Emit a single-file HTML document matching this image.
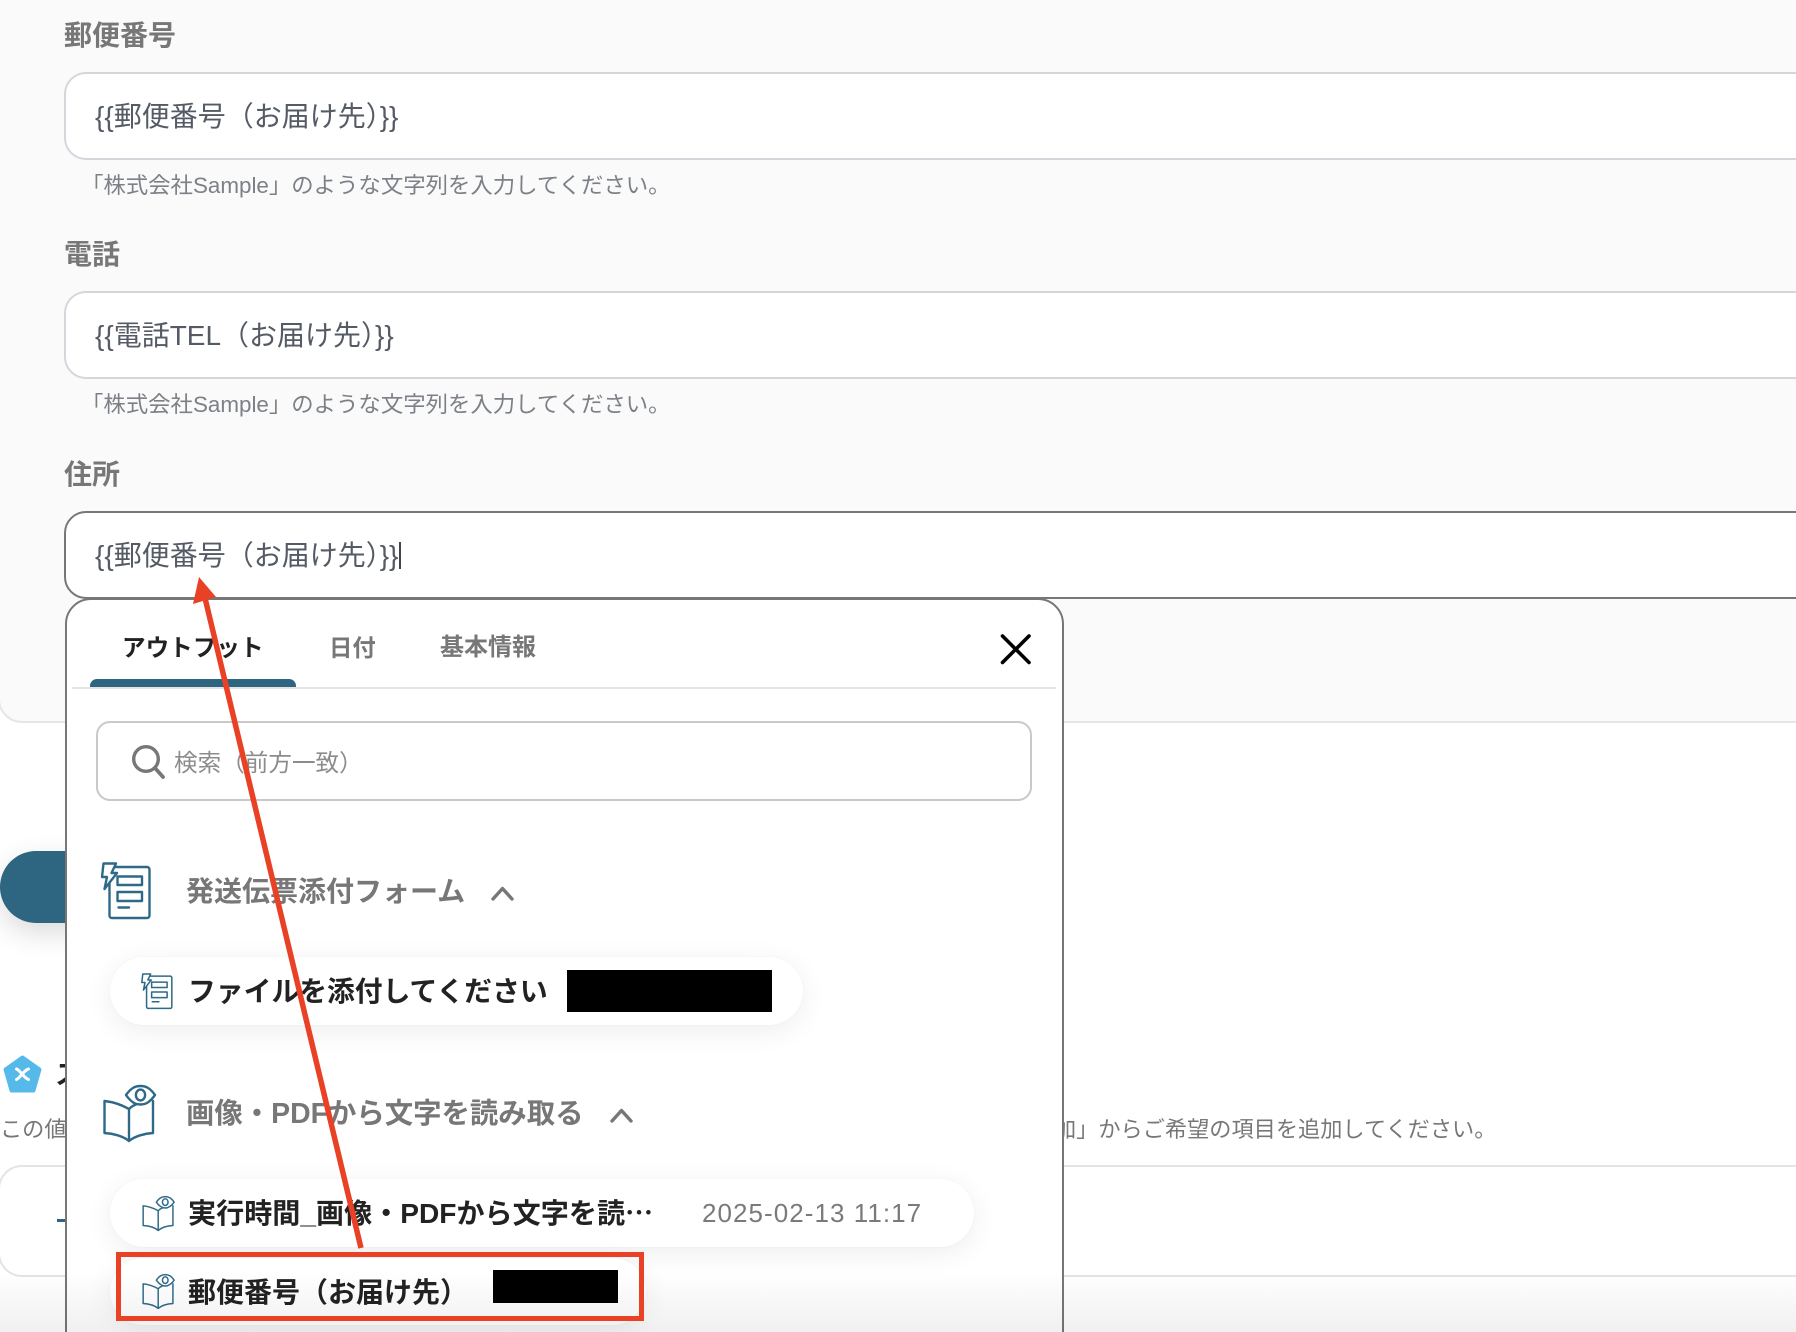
<!DOCTYPE html>
<html lang="ja">
<head>
<meta charset="utf-8">
<title>Form</title>
<style>
html,body{margin:0;padding:0;background:#fff;width:1796px;height:1332px;overflow:hidden}
body{position:relative;font-family:"Liberation Sans","Noto Sans CJK JP",sans-serif}
#w{position:absolute;left:0;top:0;width:1796px;height:1332px;overflow:hidden;background:#fff}
.a{position:absolute;box-sizing:border-box}
.t{position:absolute;white-space:nowrap;line-height:40px;height:40px}
.lb{font-size:28px;font-weight:700;color:#777}
.in{font-size:28px;color:#555b64}
.hint{font-size:22.4px;color:#7c8087}
.box{position:absolute;box-sizing:border-box;left:64px;width:1800px;height:88px;background:#fff;border:2px solid #d3d7db;border-radius:22px}
.hd{font-size:28px;font-weight:700;color:#777}
.it{font-size:27.8px;font-weight:700;color:#222}
.pill{position:absolute;box-sizing:border-box;left:110px;background:#fff;border-radius:34px;box-shadow:0 6px 28px rgba(0,0,0,.07),0 0 2px rgba(0,0,0,.04)}
svg{position:absolute;overflow:visible}
</style>
</head>
<body>
<div id="w">
<svg width="0" height="0" style="position:absolute">
<defs>
<symbol id="form" viewBox="0 0 50 57" overflow="visible">
<g fill="none" stroke="#2e6a87" stroke-width="2.4" stroke-linejoin="round" stroke-linecap="round">
<rect x="8.5" y="5" width="40" height="51" rx="2.5" fill="#fff"/>
<rect x="16.5" y="14.5" width="24.5" height="8.5"/>
<rect x="16.5" y="30" width="24.5" height="9"/>
<path d="M17.5 45.5H28"/>
<path d="M2.5 1.5H15L10.5 11H16L3.5 27L6 15H1Z" fill="#fff"/>
</g>
</symbol>
<symbol id="book" viewBox="0 0 53 57" overflow="visible">
<g fill="none" stroke="#2e6a87" stroke-width="2.4" stroke-linejoin="round" stroke-linecap="round">
<path d="M26 24C19 20 10 17 1.5 16V48C10 48.5 20 51 26 56C32 51 42 48.5 50 48V16"/>
<path d="M26 24V56M26 24C28 22 30 20.5 33 19.5"/>
<path d="M23 10C28 3 32 1 37.5 1C43 1 47 3 52 10C47 17 43 19.5 37.5 19.5C32 19.5 28 17 23 10Z" fill="#fff"/>
<ellipse cx="37.5" cy="10" rx="4.6" ry="5.4"/>
</g>
</symbol>
</defs>
</svg>

<!-- grey form panel -->
<div class="a" style="left:-2px;top:-30px;width:1900px;height:753px;background:#fafafa;border:2px solid #e3e6ea;border-radius:24px"></div>

<div class="t lb" style="left:64px;top:16px">郵便番号</div>
<div class="box" style="top:72px"></div>
<div class="t in" style="left:95px;top:97px">{{郵便番号（お届け先）}}</div>
<div class="t hint" style="left:81px;top:166px">「株式会社Sample」のような文字列を入力してください。</div>

<div class="t lb" style="left:64px;top:235px">電話</div>
<div class="box" style="top:291px"></div>
<div class="t in" style="left:95px;top:316px">{{電話TEL（お届け先）}}</div>
<div class="t hint" style="left:81px;top:385px">「株式会社Sample」のような文字列を入力してください。</div>

<div class="t lb" style="left:64px;top:455px">住所</div>
<div class="box" style="top:511px;border-color:#777"></div>
<div class="t in" style="left:95px;top:536px">{{郵便番号（お届け先）}}</div>
<div class="a" style="left:399px;top:542px;width:1.5px;height:27px;background:#444"></div>

<!-- teal button behind -->
<div class="a" style="left:0;top:851px;width:200px;height:72px;background:#2e6580;border-radius:36px;box-shadow:0 10px 28px rgba(0,0,0,.14)"></div>

<!-- logo + section behind panel -->
<svg style="left:3px;top:1055px" width="39" height="38" viewBox="0 0 39 38">
<path d="M19.5 2.5L36.5 14.5L30.5 35.5H8.5L2.5 14.5Z" fill="#55b9ea" stroke="#55b9ea" stroke-width="4" stroke-linejoin="round"/>
<path d="M13.5 14C17 15 21 23 25.5 24.5M25.5 14C21 15 17 23 13.5 24.5" fill="none" stroke="#fff" stroke-width="3" stroke-linecap="round"/>
</svg>
<div class="t" style="left:55px;top:1055px;font-size:27px;font-weight:700;color:#222">ス</div>
<div class="t hint" style="left:0;top:1110px;color:#777;font-size:22.2px">この値</div>
<div class="t hint" style="left:1054px;top:1110px;color:#777;font-size:22.2px">加」からご希望の項目を追加してください。</div>
<div class="a" style="left:-2px;top:1165px;width:1900px;height:112px;background:#fff;border:2px solid #e4e4e4;border-radius:24px"></div>
<div class="a" style="left:57px;top:1219px;width:10px;height:3px;background:#2e6580"></div>

<!-- popup panel -->
<div class="a" style="left:65px;top:598px;width:999px;height:800px;background:#fff;border:2px solid #777;border-radius:26px"></div>

<div class="t" style="left:122px;top:629px;font-size:23.6px;font-weight:700;color:#222">アウトフット</div>
<div class="t" style="left:329px;top:628px;font-size:23.4px;font-weight:700;color:#777">日付</div>
<div class="t" style="left:440px;top:628px;font-size:24px;font-weight:700;color:#777">基本情報</div>
<div class="a" style="left:90px;top:679px;width:206px;height:8px;background:#2e6580;border-radius:7px 7px 0 0"></div>
<div class="a" style="left:72px;top:687px;width:984px;height:2px;background:#e4e4e4"></div>
<svg style="left:1000px;top:634px" width="30" height="30" viewBox="0 0 30 30"><path d="M2.5 2L29 28.5M29 2L2.5 28.5" stroke="#000" stroke-width="3.6" stroke-linecap="round" fill="none"/></svg>

<div class="a" style="left:96px;top:721px;width:936px;height:80px;border:2px solid #c9c9c9;border-radius:14px;background:#fff"></div>
<svg style="left:132px;top:745px" width="32" height="33" viewBox="0 0 32 33"><circle cx="14" cy="14" r="12.3" fill="none" stroke="#777" stroke-width="3.4"/><path d="M23 23L31 32" stroke="#777" stroke-width="3.8" stroke-linecap="round"/></svg>
<div class="t" style="left:174px;top:744px;font-size:23.6px;color:#8c8c8c">検索（前方一致）</div>

<!-- section 1 -->
<svg style="left:101px;top:862px" width="50" height="57"><use href="#form"/></svg>
<div class="t hd" style="left:186px;top:872px">発送伝票添付フォーム</div>
<svg style="left:491px;top:886px" width="23" height="15" viewBox="0 0 23 15"><path d="M2 13L11.5 2.5L21 13" fill="none" stroke="#777" stroke-width="3.4" stroke-linecap="round" stroke-linejoin="round"/></svg>
<div class="pill" style="top:957px;width:693px;height:68px"></div>
<svg style="left:141px;top:973px" width="32" height="36" viewBox="0 0 50 57"><use href="#form" width="50" height="57"/></svg>
<div class="t it" style="left:188px;top:972px">ファイルを添付してください</div>
<div class="a" style="left:567px;top:970px;width:205px;height:42px;background:#000"></div>

<!-- section 2 -->
<svg style="left:103px;top:1085px" width="53" height="57"><use href="#book"/></svg>
<div class="t hd" style="left:186px;top:1094px;font-size:28.4px">画像・PDFから文字を読み取る</div>
<svg style="left:610px;top:1108px" width="23" height="15" viewBox="0 0 23 15"><path d="M2 13L11.5 2.5L21 13" fill="none" stroke="#777" stroke-width="3.4" stroke-linecap="round" stroke-linejoin="round"/></svg>
<div class="pill" style="top:1179px;width:864px;height:68px"></div>
<svg style="left:142px;top:1196px" width="33" height="35" viewBox="0 0 53 57"><use href="#book" width="53" height="57"/></svg>
<div class="t it" style="left:188px;top:1192px;font-size:28.1px">実行時間_画像・PDFから文字を読<span style="font-family:'Noto Sans CJK JP',sans-serif">…</span></div>
<div class="t" style="left:702px;top:1193px;font-size:26px;letter-spacing:1.05px;color:#7a7a7a">2025-02-13 11:17</div>
<div class="pill" style="top:1258px;width:536px;height:67px"></div>
<svg style="left:142px;top:1274px" width="33" height="35" viewBox="0 0 53 57"><use href="#book" width="53" height="57"/></svg>
<div class="t it" style="left:188px;top:1273px;font-size:28px">郵便番号（お届け先）</div>
<div class="a" style="left:493px;top:1270px;width:125px;height:33px;background:#000"></div>

<!-- bottom fade -->
<div class="a" style="left:0;top:1272px;width:1796px;height:60px;background:linear-gradient(rgba(0,0,0,0),rgba(0,0,0,.06))"></div>

<!-- annotations -->
<div class="a" style="left:116px;top:1252px;width:528px;height:69px;border:5px solid #e94126"></div>
<svg style="left:0;top:0" width="1796" height="1332" viewBox="0 0 1796 1332">
<path d="M361 1248L205 598" stroke="#e94126" stroke-width="5.5" fill="none"/>
<path d="M199 577L216 597L193 604Z" fill="#e94126"/>
</svg>
</div>
</body>
</html>
